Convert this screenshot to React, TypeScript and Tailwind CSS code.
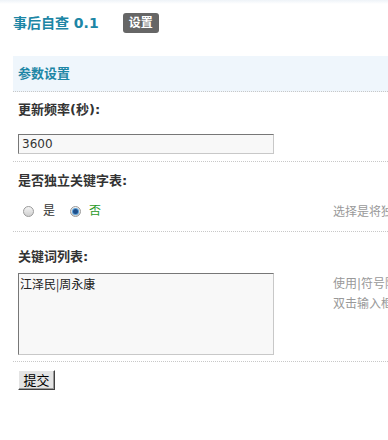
import React, { useState } from "react";

const font = { fontFamily: '"DejaVu Sans", Verdana, "Noto Sans CJK SC", sans-serif' };

const Radio: React.FC<{ checked: boolean; onClick: () => void }> = ({ checked, onClick }) => (
  <span
    onClick={onClick}
    className="inline-flex items-center justify-center w-[11px] h-[11px] rounded-full border border-[#9a9a9a] bg-[linear-gradient(#f4f4f4,#cfcfcf)] cursor-pointer"
  >
    {checked && <span className="w-[5px] h-[5px] rounded-full bg-[#1f4f8a] shadow-[0_0_0_1px_#5aa0d8]" />}
  </span>
);

export default function App() {
  const [interval, setInterval] = useState("3600");
  const [independent, setIndependent] = useState(false);
  const [words, setWords] = useState("江泽民|周永康");

  return (
    <div style={font} className="w-[388px] h-[440px] overflow-hidden bg-white text-[12px] text-[#333]">
      <div className="h-[4px] bg-[linear-gradient(#eef3f8,#ffffff)]" />

      {/* title */}
      <div className="flex items-center h-[36px] pl-[13px] pt-[1px]">
        <h2 className="text-[14px] font-bold text-[#1d86a5] leading-none">事后自查 0.1</h2>
        <span className="ml-[24px] px-[6px] h-[20px] flex items-center rounded-[3px] bg-[#666] text-white text-[12px] font-bold">
          设置
        </span>
      </div>

      <div className="ml-[13px] mt-[16px]">
        {/* section header */}
        <div className="h-[36px] flex items-center pl-[5px] bg-[#eff6fc] border-b border-dotted border-[#c8c8c8]">
          <span className="font-bold text-[13px] text-[#1d86a5]">参数设置</span>
        </div>

        {/* row 1 */}
        <div className="pl-[5px] pt-[10px] pb-[7px] border-b border-dotted border-[#c8c8c8]">
          <div className="font-bold text-[13px] leading-[16px]">更新频率(秒):</div>
          <input
            value={interval}
            onChange={(e) => setInterval(e.target.value)}
            className="mt-[16px] w-[256px] h-[20px] px-[3px] text-[12px] text-[#333] bg-[#f8f8f8] border border-t-[#777] border-l-[#777] border-b-[#c8c8c8] border-r-[#c8c8c8] outline-none"
          />
        </div>

        {/* row 2 */}
        <div className="pl-[5px] pt-[11px] pb-[10px] border-b border-dotted border-[#c8c8c8]">
          <div className="font-bold text-[13px] leading-[16px]">是否独立关键字表:</div>
          <div className="mt-[12px] flex items-center h-[20px] whitespace-nowrap">
            <div className="w-[315px] shrink-0 flex items-center">
              <span className="ml-[5px] flex"><Radio checked={independent} onClick={() => setIndependent(true)} /></span>
              <span className={`ml-[9px] ${independent ? "text-[#2a9a2a]" : ""}`}>是</span>
              <span className="ml-[15px] flex"><Radio checked={!independent} onClick={() => setIndependent(false)} /></span>
              <span className={`ml-[8px] ${!independent ? "text-[#2a9a2a]" : ""}`}>否</span>
            </div>
            <span className="text-[#999] mt-[2px]">选择是将独立保存关键字列表</span>
          </div>
        </div>

        {/* row 3 */}
        <div className="pl-[5px] pt-[17px] pb-[6px] border-b border-dotted border-[#c8c8c8]">
          <div className="font-bold text-[13px] leading-[16px]">关键词列表:</div>
          <div className="mt-[8px] flex whitespace-nowrap">
            <textarea
              value={words}
              onChange={(e) => setWords(e.target.value)}
              className="shrink-0 w-[256px] h-[82px] px-[1px] py-[2px] resize-none text-[12px] leading-[16px] text-[#222] bg-[#f8f8f8] border border-t-[#777] border-l-[#777] border-b-[#c8c8c8] border-r-[#c8c8c8] outline-none"
              style={{ fontFamily: '"Noto Sans CJK SC", sans-serif' }}
            />
            <div className="ml-[59px] shrink-0 pt-[1px] text-[#999] leading-[20px]">
              <div>使用|符号隔开关键词</div>
              <div>双击输入框可以编辑</div>
            </div>
          </div>
        </div>

        <div className="pl-[5px] pt-[8px]">
          <button
            type="button"
            className="w-[37px] h-[20px] flex items-center justify-center text-[13px] text-black bg-[#e4e4e4] border border-t-[#fff] border-l-[#fff] border-b-[#404040] border-r-[#404040] shadow-[inset_-1px_-1px_0_#999]"
            style={{ fontFamily: '"Noto Sans CJK SC", sans-serif' }}
          >
            提交
          </button>
        </div>
      </div>
    </div>
  );
}
